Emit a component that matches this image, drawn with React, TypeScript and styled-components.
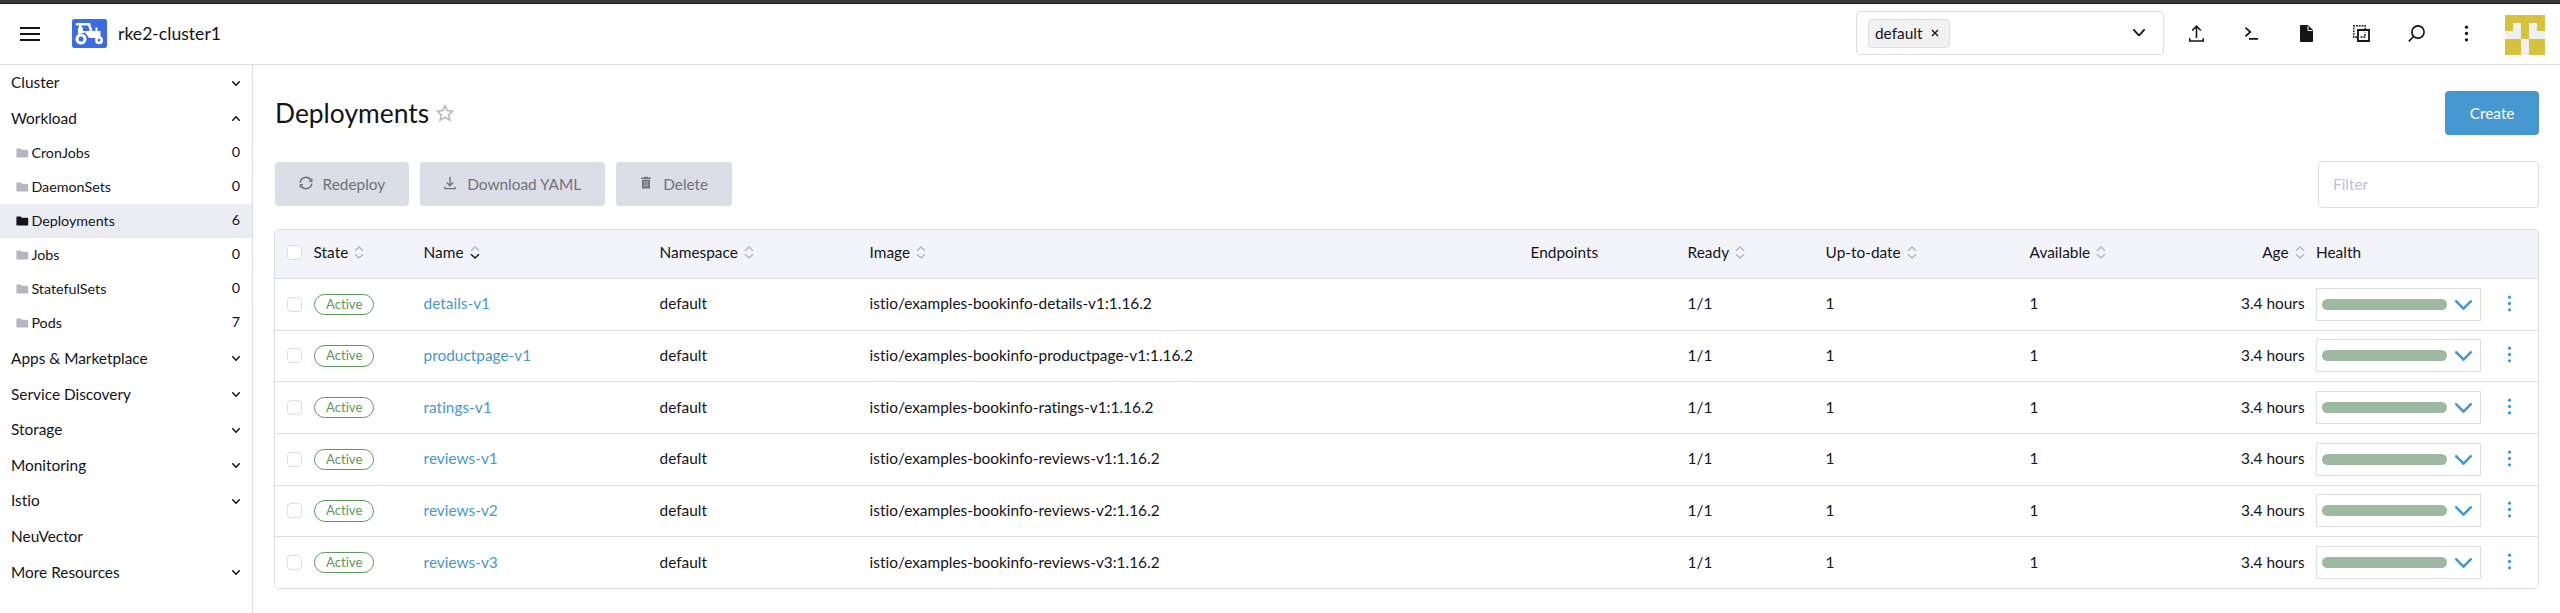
import React from 'react';
import styled, { createGlobalStyle } from 'styled-components';

const GlobalStyle = createGlobalStyle`
  * { box-sizing: border-box; }
  body {
    margin: 0;
    background: #fff;
    color: #141419;
    font-family: Lato, "Liberation Sans", sans-serif;
    font-size: 15.4px;
    line-height: 18px;
    font-variant-ligatures: none;
    overflow: hidden;
  }
`;

const Page = styled.div`
  height: 613px;
  display: flex;
  flex-direction: column;
  background: #fff;
`;

const WindowEdge = styled.div`
  height: 4px;
  flex: none;
  background: #3b3b3b;
  border-bottom: 1px solid #1e1e1e;
`;

const Header = styled.header`
  height: 61px;
  flex: none;
  display: flex;
  align-items: center;
  border-bottom: 1px solid #dcdee7;
  padding: 0 15px 0 20px;
`;

const Brand = styled.div`
  display: flex;
  align-items: center;
  flex: 1;
  svg { display: block; }
`;

const ClusterLogo = styled.svg`
  margin: 0 11px 2px 32px;
`;

const ClusterName = styled.span`
  font-size: 17.6px;
  line-height: 22px;
`;

const NamespaceSelect = styled.div`
  width: 308px;
  height: 44px;
  margin: 0 24px 2px 0;
  padding: 0 18px 0 11px;
  border: 1px solid #dcdee7;
  border-radius: 4px;
  display: flex;
  align-items: center;
  justify-content: space-between;
  svg { margin-bottom: 1px; }
`;

const Chip = styled.span`
  height: 29px;
  width: 82px;
  display: flex;
  align-items: center;
  gap: 9px;
  padding: 0 6px 0 6px;
  border: 1px solid #dcdee7;
  border-radius: 4px;
  background: #f2f2f2;
`;

const Actions = styled.div`
  display: flex;
  gap: 38px;
  margin-right: 33px;
`;

const HeaderAction = styled.button`
  width: 17px;
  height: 17px;
  margin-bottom: 2px;
  padding: 0;
  border: 0;
  background: none;
  color: #141419;
  svg { display: block; }
`;

const Avatar = styled.div`
  margin: 1px 0 0 30px;
  svg { display: block; }
`;

const Body = styled.div`
  flex: 1;
  display: flex;
  min-height: 0;
`;

const Sidebar = styled.nav`
  width: 253px;
  flex: none;
  border-right: 1px solid #dcdee7;
`;

const Group = styled.div`
  height: 35.6px;
  display: flex;
  align-items: center;
  justify-content: space-between;
  padding: 0 12px 1px 11px;
  svg { margin-top: 2px; }
`;

const NavList = styled.div`
  padding-bottom: 0.5px;
`;

const NavItem = styled.div<{ $active?: boolean }>`
  height: 34px;
  display: flex;
  align-items: center;
  padding: 0 12px 0 16px;
  font-size: 14.3px;
  background: ${(p) => (p.$active ? '#ecedf3' : 'transparent')};
  svg { color: ${(p) => (p.$active ? '#141419' : '#b6b6c2')}; margin-right: 2.4px; }
`;

const NavLabel = styled.span`
  flex: 1;
`;

const NavCount = styled.span`
  padding-bottom: 2px;
`;

const Main = styled.main`
  flex: 1;
  min-width: 0;
  padding: 26px 21px 0 21px;
`;

const TitleRow = styled.div`
  height: 44px;
  display: flex;
  align-items: center;
  justify-content: space-between;
`;

const Title = styled.h1`
  margin: 0;
  padding-left: 1px;
  font-size: 26.4px;
  line-height: 32px;
  font-weight: 400;
  display: flex;
  align-items: center;
  gap: 7px;
`;

const Button = styled.button<{ $primary?: boolean }>`
  height: 44px;
  padding: 0 ${(p) => (p.$primary ? '24.5px' : '23.5px')};
  border: 0;
  border-radius: 4px;
  display: flex;
  align-items: center;
  font: inherit;
  background: ${(p) => (p.$primary ? '#4798d0' : '#dcdee7')};
  color: ${(p) => (p.$primary ? '#fff' : '#717179')};
  svg { margin: -3px 10px 0 0; }
`;

const Toolbar = styled.div`
  height: 47px;
  margin: 26px 0 21px;
  display: flex;
  align-items: center;
  gap: 11px;
  padding-left: 1px;
  ${Button} { margin-bottom: 1px; }
`;

const FilterInput = styled.input`
  margin-left: auto;
  width: 221px;
  height: 47px;
  padding: 0 14px 1px;
  border: 1px solid #dcdee7;
  border-radius: 4px;
  font: inherit;
  outline: none;
  &::placeholder { color: #c0c2d3; }
`;

const Table = styled.div`
  border: 1px solid #dcdee7;
  border-radius: 5px;
  overflow: hidden;
`;

const CheckCell = styled.div`
  padding-left: 12px;
`;

const Cell = styled.div<{ $end?: boolean }>`
  display: flex;
  align-items: center;
  gap: 6px;
  padding-bottom: 2px;
  justify-content: ${(p) => (p.$end ? 'flex-end' : 'flex-start')};
  svg { margin-bottom: 0; }
`;

const Row = styled.div<{ $head?: boolean }>`
  display: grid;
  grid-template-columns: 38.6px 110px 236px 210px 661px 157px 138px 204px 150px 125px 11.4px 165px 1fr;
  align-items: center;
  height: ${(p) => (p.$head ? '48px' : '51.67px')};
  background: ${(p) => (p.$head ? '#f3f4fa' : '#fff')};
  border-top: ${(p) => (p.$head ? '0' : '1px solid #dcdee7')};
  ${CheckCell} { padding-bottom: ${(p) => (p.$head ? '3px' : '0')}; }
  ${Cell} { padding-bottom: ${(p) => (p.$head ? '3.5px' : '2px')}; }
`;

const Checkbox = styled.span`
  display: block;
  width: 15px;
  height: 15px;
  border: 1px solid #dcdee7;
  border-radius: 4px;
  background: #fff;
`;

const Badge = styled.span`
  display: block;
  width: 60px;
  height: 21.5px;
  margin-left: 0.6px;
  border: 1px solid #5d995d;
  border-radius: 11px;
  color: #5d995d;
  font-size: 13.2px;
  line-height: 18px;
  text-align: center;
`;

const Link = styled.a`
  color: #4798d0;
`;

const HealthBox = styled.div`
  height: 33px;
  width: 165px;
  border: 1px solid #dcdee7;
  display: flex;
  align-items: center;
  padding: 0 8px 0 5px;
  justify-content: space-between;
  svg { margin-top: 1px; }
`;

const HealthBar = styled.div`
  width: 125px;
  height: 11px;
  border-radius: 5.5px;
  background: #9db9a2;
`;

const RowMenu = styled.div`
  display: flex;
  padding: 0 0 2px 20px;
`;

type ChevronProps = { w: number; h: number; sw: number; color?: string; up?: boolean };

const Chevron = ({ w, h, sw, color = '#141419', up }: ChevronProps) => (
  <svg width={w} height={h} viewBox={`0 0 ${w} ${h}`} fill="none" stroke={color} strokeWidth={sw} strokeLinecap="round" strokeLinejoin="round">
    <path d={up ? `M${sw / 2} ${h - sw / 2}L${w / 2} ${sw / 2}L${w - sw / 2} ${h - sw / 2}` : `M${sw / 2} ${sw / 2}L${w / 2} ${h - sw / 2}L${w - sw / 2} ${sw / 2}`} />
  </svg>
);

const SortIcon = ({ active }: { active?: boolean }) => (
  <svg width="10" height="13" viewBox="0 0 10 13" fill="none" strokeWidth="1.4">
    <path d="M1 4.8L5 1L9 4.8" stroke="#b6b6c2" />
    <path d="M1 8.2L5 12L9 8.2" stroke={active ? '#141419' : '#b6b6c2'} />
  </svg>
);

const FolderIcon = () => (
  <svg width="13" height="10" viewBox="0 0 13 10" fill="currentColor">
    <path d="M1 .5h3.6l1.4 1.3h5.5a.7.7 0 0 1 .7.7v6.2a.7.7 0 0 1-.7.7H1a.7.7 0 0 1-.6-.7V1.200A.7.7 0 0 1 1 .5z" />
  </svg>
);

const Kebab = ({ color }: { color: string }) => (
  <svg width="17" height="17" viewBox="0 0 17 17" fill={color}>
    <circle cx="8.500" cy="2.200" r="1.650" />
    <circle cx="8.500" cy="8.500" r="1.650" />
    <circle cx="8.500" cy="14.800" r="1.650" />
  </svg>
);

const MenuIcon = () => (
  <svg width="20" height="14" viewBox="0 0 20 14" fill="#141419">
    <path d="M0 0h20v2H0zM0 6h20v2H0zM0 12h20v2H0z" />
  </svg>
);

const TractorLogo = () => (
  <ClusterLogo width="35" height="29" viewBox="0 0 35 29">
    <rect width="35" height="29" rx="2.500" fill="#3d6be4" />
    <path d="M5 5.200H17L19.500 13M8.300 5V12" stroke="#fff" strokeWidth="2.600" fill="none" strokeLinecap="round" />
    <path d="M6 8.500h5v3.500h7.500h5V8.500h2V12H28.500V19H17L13 13.500L6 15z" fill="#fff" />
    <circle cx="9" cy="20" r="4" fill="#3d6be4" stroke="#fff" strokeWidth="3" />
    <circle cx="27" cy="21.200" r="2.700" fill="#3d6be4" stroke="#fff" strokeWidth="2.600" />
  </ClusterLogo>
);

const UploadIcon = () => (
  <svg width="17" height="17" viewBox="0 0 17 17" fill="none" stroke="currentColor" strokeWidth="1.600">
    <path d="M8.500 13V1.500M4.200 5.500L8.500 1.200L12.800 5.500M1.800 13.200V16H15.200V13.200" />
  </svg>
);

const ShellIcon = () => (
  <svg width="17" height="17" viewBox="0 0 17 17" fill="none" stroke="currentColor" strokeWidth="1.700">
    <path d="M2.500 2.700L7.300 7L2.500 11.300M6 13.900H15" />
  </svg>
);

const FileIcon = () => (
  <svg width="17" height="17" viewBox="0 0 17 17">
    <path d="M3 0h7l5 5v11a1 1 0 0 1-1 1H3a1 1 0 0 1-1-1V1a1 1 0 0 1 1-1z" fill="#141419" />
    <path d="M10 1v4.500h4.500" stroke="#fff" fill="none" />
  </svg>
);

const CopyIcon = () => (
  <svg width="17" height="17" viewBox="0 0 17 17" fill="none" stroke="currentColor">
    <path d="M4 12.200H.8V.8H12.200V4" strokeWidth="1.400" strokeDasharray="1.800 1" />
    <path d="M5 5H16V16H5z" strokeWidth="1.800" />
    <path d="M7.500 12H12V7.500" strokeWidth="1.300" strokeDasharray="1.800 1" />
  </svg>
);

const SearchIcon = () => (
  <svg width="17" height="17" viewBox="0 0 17 17" fill="none" stroke="currentColor" strokeWidth="1.600">
    <circle cx="10" cy="7" r="6.100" />
    <path d="M5.600 11.500L.8 16.400" />
  </svg>
);

const RefreshIcon = () => (
  <svg width="14" height="14" viewBox="0 0 14 14" fill="none" stroke="currentColor" strokeWidth="1.600">
    <path d="M1.300 6.500A5.700 5.700 0 0 1 12 4.300M12.700 7.500A5.700 5.700 0 0 1 2 9.700" />
    <path d="M12.800 2.500V5.300H10M1.200 11.500V8.700H4" strokeWidth="1.300" />
  </svg>
);

const DownloadIcon = () => (
  <svg width="14" height="14" viewBox="0 0 14 14" fill="none" stroke="currentColor" strokeWidth="1.400">
    <path d="M7 .8V9.500M3.800 6.500L7 9.700L10.200 6.500M2 10.800V12.600H12V10.800" />
  </svg>
);

const TrashIcon = () => (
  <svg width="14" height="14" viewBox="0 0 14 14" fill="currentColor">
    <path d="M5.200 1.500V.8h3.600v.7h3v1.500H2.200V1.500zM3 3.700h8V12.500H3z" />
    <path d="M5.300 5v6M7 5v6M8.700 5v6" stroke="#dcdee7" strokeWidth=".5" />
  </svg>
);

const StarIcon = () => (
  <svg width="18" height="18" viewBox="0 0 18 18" fill="none" stroke="#b6b6c2" strokeWidth="1.600">
    <path d="M9 1.800L11.200 6.500L16.800 7.100L12.700 10.800L13.900 16.200L9 13.400L4.100 16.200L5.300 10.800L1.200 7.100L6.800 6.500z" />
  </svg>
);

const AvatarIcon = () => (
  <svg width="40" height="40" viewBox="0 0 5 5" shapeRendering="crispEdges">
    <rect width="5" height="5" fill="#d5c23f" />
    <path d="M1 1h1v2H0V2h1zM3 1h1v1h1v1H3zM2 3h1v2H2z" fill="#f0f0f0" />
  </svg>
);

type NavGroup = { name: string; open?: boolean; leaf?: boolean };

const kinds = [
  ['CronJobs', 0],
  ['DaemonSets', 0],
  ['Deployments', 6],
  ['Jobs', 0],
  ['StatefulSets', 0],
  ['Pods', 7],
] as const;

const groups: NavGroup[] = [
  { name: 'Cluster' },
  { name: 'Workload', open: true },
  { name: 'Apps & Marketplace' },
  { name: 'Service Discovery' },
  { name: 'Storage' },
  { name: 'Monitoring' },
  { name: 'Istio' },
  { name: 'NeuVector', leaf: true },
  { name: 'More Resources' },
];

const deployments = ['details-v1', 'productpage-v1', 'ratings-v1', 'reviews-v1', 'reviews-v2', 'reviews-v3'];

export default function App() {
  return (
    <Page>
      <GlobalStyle />
      <WindowEdge />
      <Header>
        <Brand>
          <MenuIcon />
          <TractorLogo />
          <ClusterName>rke2-cluster1</ClusterName>
        </Brand>
        <NamespaceSelect>
          <Chip>
            default
            <svg width="8" height="8" viewBox="0 0 8 8" stroke="#141419" strokeWidth="1.300"><path d="M1 1L7 7M7 1L1 7" /></svg>
          </Chip>
          <Chevron w={12} h={7.5} sw={1.8} />
        </NamespaceSelect>
        <Actions>
          <HeaderAction><UploadIcon /></HeaderAction>
          <HeaderAction><ShellIcon /></HeaderAction>
          <HeaderAction><FileIcon /></HeaderAction>
          <HeaderAction><CopyIcon /></HeaderAction>
          <HeaderAction><SearchIcon /></HeaderAction>
        </Actions>
        <HeaderAction><Kebab color="#141419" /></HeaderAction>
        <Avatar><AvatarIcon /></Avatar>
      </Header>
      <Body>
        <Sidebar>
          {groups.map((g) => (
            <React.Fragment key={g.name}>
              <Group>
                {g.name}
                {!g.leaf && <Chevron w={8} h={5} sw={1.5} up={g.open} />}
              </Group>
              {g.open && (
                <NavList>
                  {kinds.map(([name, count]) => (
                    <NavItem key={name} $active={name === 'Deployments'}>
                      <FolderIcon />
                      <NavLabel>{name}</NavLabel>
                      <NavCount>{count}</NavCount>
                    </NavItem>
                  ))}
                </NavList>
              )}
            </React.Fragment>
          ))}
        </Sidebar>
        <Main>
          <TitleRow>
            <Title>Deployments <StarIcon /></Title>
            <Button $primary>Create</Button>
          </TitleRow>
          <Toolbar>
            <Button><RefreshIcon />Redeploy</Button>
            <Button><DownloadIcon />Download YAML</Button>
            <Button><TrashIcon />Delete</Button>
            <FilterInput placeholder="Filter" />
          </Toolbar>
          <Table>
            <Row $head>
              <CheckCell><Checkbox /></CheckCell>
              <Cell>State <SortIcon /></Cell>
              <Cell>Name <SortIcon active /></Cell>
              <Cell>Namespace <SortIcon /></Cell>
              <Cell>Image <SortIcon /></Cell>
              <Cell>Endpoints</Cell>
              <Cell>Ready <SortIcon /></Cell>
              <Cell>Up-to-date <SortIcon /></Cell>
              <Cell>Available <SortIcon /></Cell>
              <Cell $end>Age <SortIcon /></Cell>
              <span />
              <Cell>Health</Cell>
              <span />
            </Row>
            {deployments.map((name) => (
              <Row key={name}>
                <CheckCell><Checkbox /></CheckCell>
                <Badge>Active</Badge>
                <Cell><Link>{name}</Link></Cell>
                <Cell>default</Cell>
                <Cell>{`istio/examples-bookinfo-${name}:1.16.2`}</Cell>
                <span />
                <Cell>1/1</Cell>
                <Cell>1</Cell>
                <Cell>1</Cell>
                <Cell $end>3.4 hours</Cell>
                <span />
                <HealthBox>
                  <HealthBar />
                  <Chevron w={17} h={10} sw={2.6} color="#4798d0" />
                </HealthBox>
                <RowMenu><Kebab color="#4798d0" /></RowMenu>
              </Row>
            ))}
          </Table>
        </Main>
      </Body>
    </Page>
  );
}
